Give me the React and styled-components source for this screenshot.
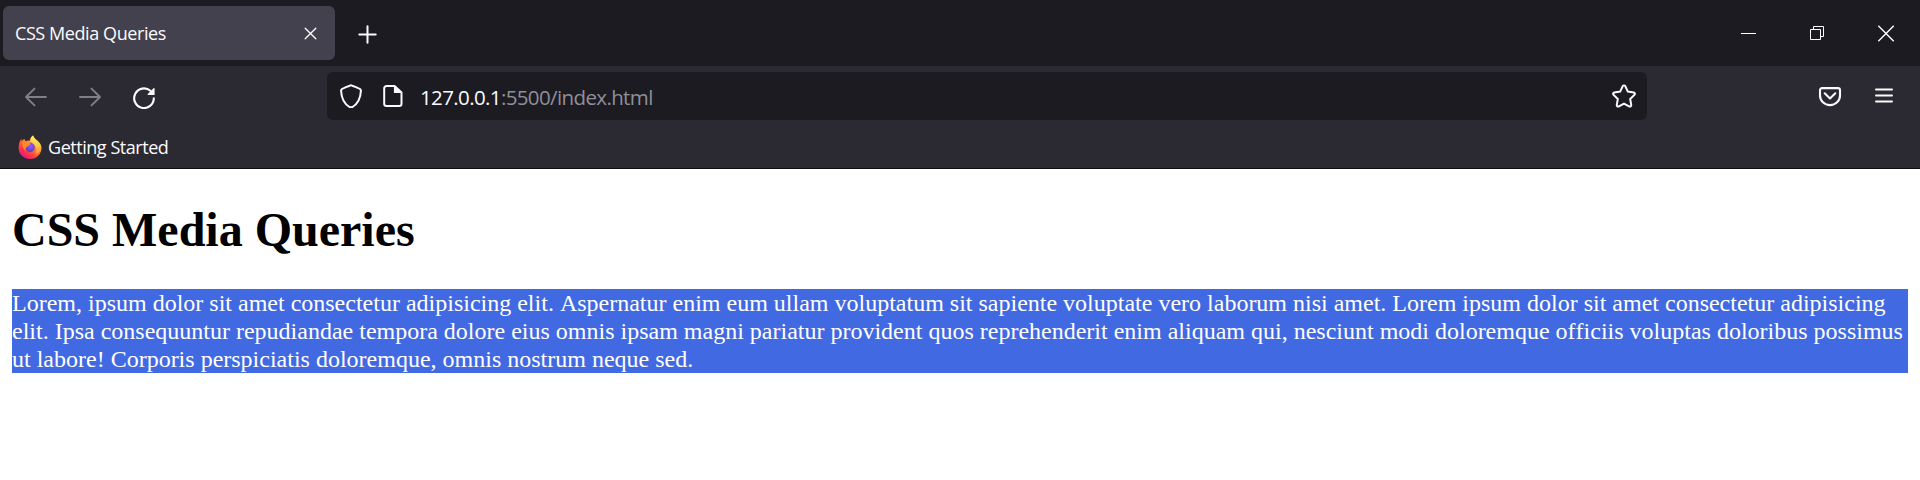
import React from "react";
import styled, { createGlobalStyle } from "styled-components";

const GlobalStyle = createGlobalStyle`
  * { box-sizing: border-box; }
  body { margin: 0; background: #fff; overflow: hidden; }
`;

const Browser = styled.div`
  display: flex;
  flex-direction: column;
  width: 1920px;
  height: 480px;
  background: #fff;
  color: #fbfbfe;
  font-family: "Open Sans", "Noto Sans", sans-serif;
  svg { display: block; flex: none; }
`;

const TabBar = styled.header`
  display: flex;
  height: 66px;
  background: #1c1b22;
`;

const Tab = styled.div`
  display: flex;
  align-items: center;
  justify-content: space-between;
  width: 332px;
  height: 54px;
  margin: 6px 0 0 3px;
  padding: 0 16px 0 12px;
  border-radius: 6px;
  background: #42414d;
`;

const Label = styled.span`
  font-size: ${(p) => p.$size || 18}px;
  line-height: 27px;
  letter-spacing: ${(p) => p.$spacing || 0}px;
  white-space: nowrap;
`;

const IconButton = styled.button`
  display: flex;
  align-items: center;
  justify-content: center;
  flex: none;
  width: ${(p) => p.$width || 54}px;
  height: ${(p) => p.$height || 54}px;
  padding: 0;
  border: 0;
  background: none;
  color: ${(p) => (p.$dim ? "#807f87" : "#fbfbfe")};
`;

const WindowControls = styled.div`
  display: flex;
  margin-left: auto;
`;

const NavBar = styled.nav`
  display: flex;
  align-items: center;
  height: 60px;
  padding: 2px 9px 0 9px;
  background: #2b2a33;
`;

const AddressBar = styled.div`
  display: flex;
  align-items: center;
  width: 1320px;
  height: 48px;
  margin: 0 156px 2px 156px;
  padding: 0 11px 0 12px;
  border-radius: 6px;
  background: #1c1b22;
`;

const PageIcon = styled.div`
  margin: 0 15px 0 18px;
`;

const Url = styled(Label)`
  flex: 1;
  padding-top: 2px;
  color: #8f8f98;
  b { color: #fbfbfe; font-weight: 400; }
`;

const Bookmarks = styled.div`
  display: flex;
  align-items: center;
  gap: 6px;
  height: 43px;
  padding: 1px 18px 0;
  border-bottom: 1px solid #0c0c0d;
  background: #2b2a33;
`;

const BookmarkIcon = styled.div`
  margin-bottom: 2px;
`;

const Page = styled.main`
  padding: 33px 12px 0;
  color: #000;
  font-family: "Liberation Serif", "Times New Roman", serif;
`;

const Title = styled.h1`
  margin: 0 0 32px;
  font-size: 48px;
  line-height: 55px;
`;

const Paragraph = styled.p`
  margin: 0;
  background: royalblue;
  color: #fff;
  font-size: 24px;
  line-height: 28px;
  font-kerning: none;
`;

function Icon({ size = 24, width = 2, children }) {
  return (
    <svg width={size} height={size} viewBox={`0 0 ${size} ${size}`} fill="none" stroke="currentColor"
      strokeWidth={width} strokeLinecap="round" strokeLinejoin="round">
      {children}
    </svg>
  );
}

function FirefoxLogo() {
  return (
    <svg width="24" height="26" viewBox="0 0 24 26">
      <defs>
        <linearGradient id="flame" x1="0.85" y1="0.1" x2="0.25" y2="0.95">
          <stop offset="0" stopColor="#fff44f" />
          <stop offset="0.25" stopColor="#ffb52e" />
          <stop offset="0.5" stopColor="#ff7139" />
          <stop offset="0.78" stopColor="#ff3647" />
          <stop offset="1" stopColor="#e31587" />
        </linearGradient>
        <radialGradient id="globe" cx="0.55" cy="0.35" r="0.7">
          <stop offset="0" stopColor="#9059ff" />
          <stop offset="1" stopColor="#5b3bbd" />
        </radialGradient>
        <linearGradient id="tail" x1="0" y1="0" x2="0" y2="1">
          <stop offset="0" stopColor="#fff36b" />
          <stop offset="1" stopColor="#ff9a2e" />
        </linearGradient>
      </defs>
      <path fill="url(#flame)" d="M3.4 4.4C3.2 5.5 3.3 6.4 3.6 7.2 4.5 6.2 5.3 5.6 6.4 5.1 6.6 6 7.3 6.7 8 7.2 9.2 6.7 10.6 6.5 12 6.7 12 4.4 13.2 2.6 15.1 1.4 15.6 3.6 17.2 4.9 18.8 6.2 21.7 8.5 23.5 10.8 23.5 14 23.5 20.2 18.4 25 12.2 25S.6 20.4.6 14.2C.6 10.6 1.5 7.2 3.4 4.4Z" />
      <path fill="url(#tail)" d="M12.4 6.8C12.6 4.4 13.5 2.6 15.1 1.4 15.8 4.2 18 5.4 19.8 7.1 21.7 9 22.8 11.1 22.5 14.2 22.1 17.2 20.1 19 17.5 20 19.5 15.8 17.8 12 15.2 9.6Z" />
      <circle cx="12.1" cy="13.5" r="4.7" fill="url(#globe)" />
      <path fill="#ff8b2b" d="M4.2 8.5C6.8 7 9 8 10.1 9.1 11.2 8.9 12.2 9.1 13 9.6 12.6 11 10.4 11.1 9.7 12.2 9.4 13 8.7 13.2 7.8 13.6 7.1 14.3 7.5 15.8 8.4 17 6.1 16 4.6 12.4 4.2 8.5Z" />
    </svg>
  );
}

export default function App() {
  return (
    <Browser>
      <GlobalStyle />
      <TabBar>
        <Tab>
          <Label $size={18} $spacing={-0.42}>CSS Media Queries</Label>
          <Icon size={17} width={1.35}><path d="M3.2 3.2 13.8 13.8M13.8 3.2 3.2 13.8" /></Icon>
        </Tab>
        <IconButton $width={65} $height={68} aria-label="New tab">
          <Icon size={19}><path d="M9.5 1.3V17.7M1.3 9.5H17.7" /></Icon>
        </IconButton>
        <WindowControls>
          <IconButton $width={69} $height={66} aria-label="Minimize">
            <svg width="15" height="15"><path fill="#fff" d="M0 7h15v1H0z" /></svg>
          </IconButton>
          <IconButton $width={68} $height={66} aria-label="Restore">
            <svg width="14" height="14" fill="none" stroke="#fff"><path d="M.5 3.5h10v10H.5zM3.5 3.5V.5h10v10h-3" /></svg>
          </IconButton>
          <IconButton $width={69} $height={66} aria-label="Close">
            <svg width="17" height="17" stroke="#fff" strokeWidth="1.3"><path d="M1.3.8 16.7 16.2M16.7.8 1.3 16.2" /></svg>
          </IconButton>
        </WindowControls>
      </TabBar>
      <NavBar>
        <IconButton $dim aria-label="Back">
          <Icon width={1.9}><path d="M22 12H2M10.5 3.6 2 12l8.5 8.4" /></Icon>
        </IconButton>
        <IconButton $dim aria-label="Forward">
          <Icon width={1.9}><path d="M2 12H22M13.5 3.6 22 12l-8.5 8.4" /></Icon>
        </IconButton>
        <IconButton aria-label="Reload">
          <Icon width={2.1}>
            <path d="M21.8 13.2A9.8 9.8 0 1 1 18.4 5.8" />
            <path d="M22 3.6V9.4H16.2Z" fill="currentColor" strokeWidth="1.2" />
          </Icon>
        </IconButton>
        <AddressBar>
          <Icon>
            <path d="M12 1.2C12.5 1.2 20 4.3 21 5c.7.5 1 1.2.9 2C21.5 14.6 18.8 19.8 13.5 23c-1.2.6-1.8.6-3 0C5.2 19.8 2.5 14.6 2.1 7c-.1-.8.2-1.5.9-2 1-.7 8.5-3.8 9-3.8Z" />
          </Icon>
          <PageIcon>
            <Icon>
              <path d="M13.5 2H5.5a2.3 2.3 0 0 0-2.3 2.3v15.4A2.3 2.3 0 0 0 5.5 22h12.7a2.3 2.3 0 0 0 2.3-2.3V8.5Z" />
              <path d="M13.5 2V8.5H20.5Z" fill="currentColor" strokeWidth="1.2" />
            </Icon>
          </PageIcon>
          <Url $size={20.5} $spacing={-0.62}><b>127.0.0.1</b>:5500/index.html</Url>
          <Icon>
            <path d="M10.7 2.2c.5-1.1 2.1-1.1 2.6 0l2.5 5.4 5.8.8c1.3.2 1.7 1.6.8 2.5l-4.2 4.1 1 5.9c.2 1.2-1 2.1-2.1 1.5L12 19.6l-5.1 2.8c-1.1.6-2.3-.3-2.1-1.5l1-5.9-4.2-4.1c-.9-.9-.5-2.3.8-2.5l5.8-.8Z" />
          </Icon>
        </AddressBar>
        <IconButton aria-label="Save to Pocket">
          <Icon width={2.1}>
            <path d="M4 3.1H20a2 2 0 0 1 2 2v5.4a10 9.6 0 0 1-20 0V5.1a2 2 0 0 1 2-2Z" />
            <path d="M6.7 8.3 12 13.4 17.3 8.3" />
          </Icon>
        </IconButton>
        <IconButton aria-label="Menu">
          <Icon width={2}><path d="M4 4.5H20M4 10.5H20M4 16.5H20" /></Icon>
        </IconButton>
      </NavBar>
      <Bookmarks>
        <BookmarkIcon><FirefoxLogo /></BookmarkIcon>
        <Label $size={18} $spacing={-0.46}>Getting Started</Label>
      </Bookmarks>
      <Page>
        <Title>CSS Media Queries</Title>
        <Paragraph>
          Lorem, ipsum dolor sit amet consectetur adipisicing elit. Aspernatur enim eum ullam voluptatum sit sapiente
          voluptate vero laborum nisi amet. Lorem ipsum dolor sit amet consectetur adipisicing elit. Ipsa consequuntur
          repudiandae tempora dolore eius omnis ipsam magni pariatur provident quos reprehenderit enim aliquam qui,
          nesciunt modi doloremque officiis voluptas doloribus possimus ut labore! Corporis perspiciatis doloremque,
          omnis nostrum neque sed.
        </Paragraph>
      </Page>
    </Browser>
  );
}
